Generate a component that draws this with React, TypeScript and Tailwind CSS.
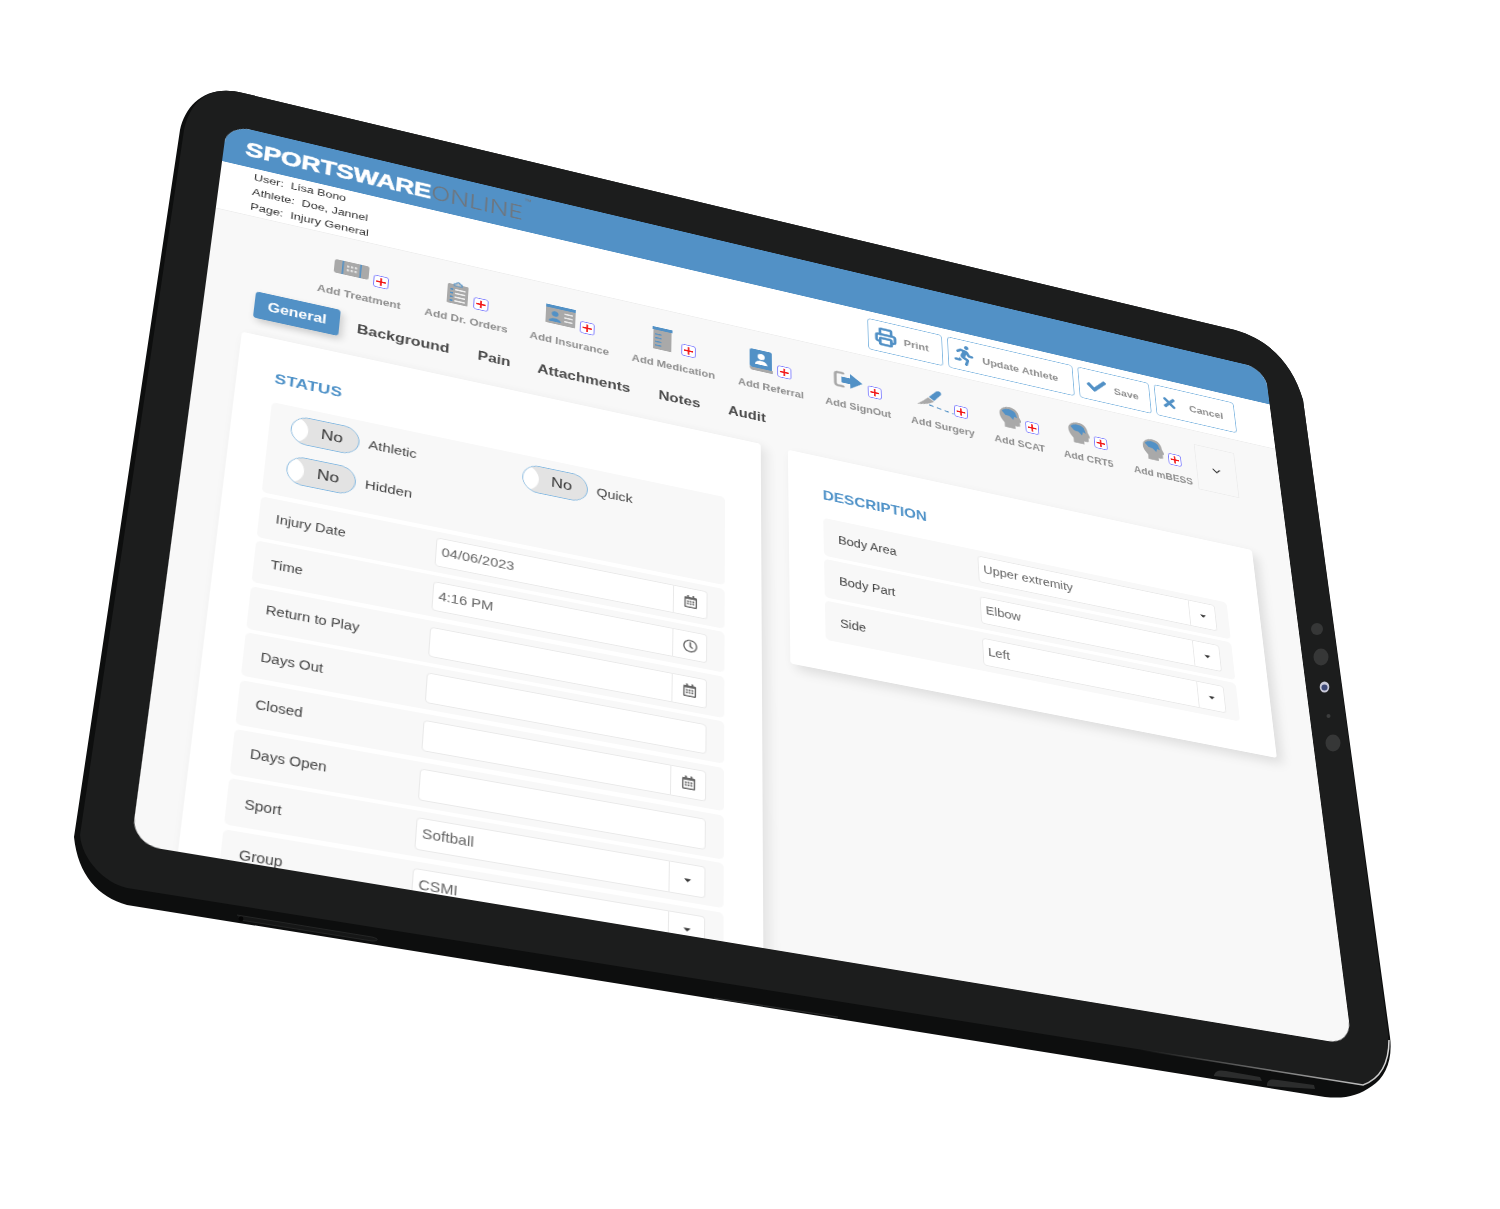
import React from "react";
import { Printer, ChevronDown } from "lucide-react";
import { FaRunning, FaCheck, FaTimes, FaRegCalendarAlt, FaRegClock, FaCaretDown } from "react-icons/fa";

function solve(A: number[][], b: number[]) {
  const n = b.length;
  const M = A.map((r, i) => [...r, b[i]]);
  for (let i = 0; i < n; i++) {
    let p = i;
    for (let j = i + 1; j < n; j++) if (Math.abs(M[j][i]) > Math.abs(M[p][i])) p = j;
    [M[i], M[p]] = [M[p], M[i]];
    for (let j = 0; j < n; j++) {
      if (j === i) continue;
      const f = M[j][i] / M[i][i];
      for (let k = i; k <= n; k++) M[j][k] -= f * M[i][k];
    }
  }
  return M.map((r, i) => r[n] / r[i]);
}
function toMatrix(src: number[][], dst: number[][]) {
  const A: number[][] = [], b: number[] = [];
  for (let i = 0; i < 4; i++) {
    const [x, y] = src[i], [u, v] = dst[i];
    A.push([x, y, 1, 0, 0, 0, -x * u, -y * u]); b.push(u);
    A.push([0, 0, 0, x, y, 1, -x * v, -y * v]); b.push(v);
  }
  const h = solve(A, b);
  return `matrix3d(${h[0]},${h[3]},0,${h[6]},${h[1]},${h[4]},0,${h[7]},0,0,1,0,${h[2]},${h[5]},0,1)`;
}
const W = 1200, H = 860;
const screenTransform = toMatrix([[0, 0], [W, 0], [W, H], [0, H]], [[227, 124], [1265, 369], [1352, 1045], [131, 844]]);

const G = "#a9a9a9", B = "#5291c6";

const Bandage = () => (
  <svg width="36" height="20" viewBox="0 0 36 20">
    <rect x="0" y="1" width="36" height="18" rx="3" fill={G} />
    <rect x="8" y="1" width="1.6" height="18" fill={B} />
    <rect x="26.4" y="1" width="1.6" height="18" fill={B} />
    {[13, 17, 21].map(x => [6, 11].map(y => <rect key={x + "-" + y} x={x} y={y} width="2.4" height="2.6" fill="#e4e4e4" />))}
  </svg>
);
const Clipboard = () => (
  <svg width="24" height="30" viewBox="0 0 24 30">
    <rect x="1" y="4" width="22" height="26" rx="1.5" fill={G} />
    <path d="M8 6 L8 3 L10 3 C10 0 14 0 14 3 L16 3 L16 6 Z" fill="#c8c8c8" stroke={B} strokeWidth="1.2" />
    {[11, 16, 21, 26].map(y => <rect key={y} x="9" y={y - 1} width="11" height="2" fill="#eee" />)}
    {[11, 16, 21, 26].map(y => <rect key={y} x="4" y={y - 1} width="3" height="2" fill={B} />)}
  </svg>
);
const Card = () => (
  <svg width="32" height="25" viewBox="0 0 32 25">
    <rect x="0" y="3" width="32" height="22" rx="1" fill={G} />
    <rect x="0" y="0" width="32" height="4" fill={B} />
    <circle cx="10" cy="11.5" r="3.6" fill={B} />
    <path d="M3.5 22 C3.5 16 16.5 16 16.5 22 Z" fill={B} />
    {[8, 13, 18].map(y => <rect key={y} x="20" y={y} width="9" height="2" fill="#e8e8e8" />)}
  </svg>
);
const Med = () => (
  <svg width="22" height="30" viewBox="0 0 22 30">
    <rect x="1" y="3" width="20" height="27" fill={G} />
    <rect x="0" y="0" width="22" height="4" fill={B} />
    {[9, 14, 19, 24].map(y => <rect key={y} x="3" y={y} width="7" height="1.6" fill={B} />)}
  </svg>
);
const Referral = () => (
  <svg width="26" height="30" viewBox="0 0 26 30">
    <path d="M3 0 H23 C24.5 0 25 1 25 2 V25 H3 C1 25 0 24 0 22 V3 C0 1 1 0 3 0 Z" fill={B} />
    <path d="M0 24 C0 27 1 29 4 29 H26 V25 H4 C2 25 1 24.500 0 24 Z" fill={G} />
    <circle cx="13" cy="9" r="4" fill="#fff" />
    <path d="M6 20 C6 12.500 20 12.500 20 20 Z" fill="#fff" />
  </svg>
);
const SignOut = () => (
  <svg width="34" height="24" viewBox="0 0 34 24">
    <path d="M11 3 H5 C3 3 2 4 2 6 V18 C2 20 3 21 5 21 H11" fill="none" stroke={G} strokeWidth="3.2" strokeLinecap="round" />
    <path d="M9 8 H19 V2 L33 12 L19 22 V16 H9 Z" fill={B} />
  </svg>
);
const Surgery = () => (
  <svg width="44" height="28" viewBox="0 0 44 28">
    <path d="M15 11 L24 1 C27 -1 31 1 29 5 L21 15 Z" fill={B} />
    <path d="M1 24 C6 20 11 15 14 12 L21 16 C15 21 8 23 1 24 Z" fill={G} />
    <path d="M15 22 L43 27" stroke={B} strokeWidth="1.6" strokeDasharray="5 4" fill="none" />
  </svg>
);
const Head = () => (
  <svg width="28" height="30" viewBox="0 0 40 42">
    <path d="M5 22 C1 10 11 1 22 1 C32 1 37 9 37 17 L41 26 C41 28 38 28 38 28 L38 34 C38 36 35 37 30 36 L30 42 L12 42 L12 33 C9 30 6 26 5 22 Z" fill={G} />
    <path d="M8 11 C13 4 25 3 31 10 L34 20 L29 18 L27 25 L21 19 L14 18 Z" fill={B} />
  </svg>
);
const Plus = () => (
  <div className="self-end flex items-center justify-center w-[16px] h-[16px] shrink-0 rounded-[3px] border border-[#7d7dff] bg-white">
    <svg width="12" height="12" viewBox="0 0 12 12"><path d="M6 1 V11 M1 6 H11" stroke="#f21818" strokeWidth="1.8" /></svg>
  </div>
);

const tools = [
  { w: "w-[111px]", gap: "gap-[5px]", icon: <Bandage />, label: "Add Treatment" },
  { w: "w-[111px]", gap: "gap-[5px]", icon: <Clipboard />, label: "Add Dr. Orders" },
  { w: "w-[110px]", gap: "gap-[5px]", icon: <Card />, label: "Add Insurance" },
  { w: "w-[117px]", gap: "gap-[10px]", icon: <Med />, label: "Add Medication" },
  { w: "w-[98px]", gap: "gap-[5px]", icon: <Referral />, label: "Add Referral" },
  { w: "w-[98px]", gap: "gap-[5px]", icon: <SignOut />, label: "Add SignOut" },
  { w: "w-[97px]", gap: "gap-0", icon: <Surgery />, label: "Add Surgery" },
  { w: "w-[82px]", gap: "gap-[5px]", icon: <Head />, label: "Add SCAT" },
  { w: "w-[84px]", gap: "gap-[5px]", icon: <Head />, label: "Add CRT5" },
  { w: "w-[78px]", gap: "gap-[5px]", icon: <Head />, label: "Add mBESS" },
];

const Btn = ({ cls, icon, label }: { cls: string; icon: React.ReactNode; label: string }) => (
  <div className={`${cls} h-[44px] flex items-center bg-white border border-[#86bae2] rounded-[4px]`}>
    {icon}
    <span className="pt-[4px] text-[13px] font-bold text-[#8e8e8e] whitespace-nowrap">{label}</span>
  </div>
);

const Toggle = ({ label }: { label: string }) => (
  <div className="flex items-center gap-[9px]">
    <div className="h-[34px] w-[68px] flex overflow-hidden rounded-full border-[1.5px] border-[#86bae2] bg-[#e3e3e3]">
      <div className="w-[16px] bg-white rounded-r-full" />
      <div className="flex-1 flex items-center justify-center pr-[3px] text-[17px] text-[#333]">No</div>
    </div>
    <span className="text-[14.8px] text-[#444]">{label}</span>
  </div>
);

const Addon = ({ w, children }: { w: string; children: React.ReactNode }) => (
  <div className={`${w} h-[34px] flex items-center justify-center bg-white border border-l-0 border-[#e9e9e9] rounded-r-[4px] text-[#666]`}>{children}</div>
);

const Row = ({ label, value, addon, wide }: { label: string; value?: string; addon?: React.ReactNode; wide?: boolean }) => (
  <div className={`${wide ? "pr-[15px]" : "pr-[18px]"} h-[48px] shrink-0 flex items-center pl-[16px] bg-[#f8f8f8] rounded-[5px]`}>
    <div className="w-[156px] shrink-0 text-[14px] text-[#444]">{label}</div>
    <div className={`${addon ? "rounded-l-[4px]" : "rounded-[4px]"} flex-1 h-[34px] flex items-center px-[5px] bg-white border border-[#e9e9e9] text-[14.5px] text-[#666]`}>{value}</div>
    {addon}
  </div>
);

const Cal = <FaRegCalendarAlt size={15} />;
const Caret = <FaCaretDown size={11} className="text-[#333]" />;

function Screen() {
  return (
    <div
      className="absolute left-0 top-0 origin-top-left w-[1200px] h-[860px] flex flex-col overflow-hidden rounded-[26px] bg-[#f8f8f8] blur-[0.35px]"
      style={{ transform: screenTransform, fontFamily: '"Liberation Sans", Arial, sans-serif' }}
    >
      <div className="h-[52px] shrink-0 flex items-end pl-[22px] pb-[11px] bg-[#5291c6]">
        <span className="text-[28px] leading-[27px] font-bold tracking-[-0.3px] text-white [-webkit-text-stroke:0.7px_white]">SPORTSWARE</span>
        <span className="text-[27px] leading-[27px] font-light text-[#6e767f]" style={{ fontFamily: 'Inter, sans-serif' }}>ONLINE</span>
        <span className="text-[9px] leading-[18px] self-start text-[#6e767f]">™</span>
      </div>

      <div className="h-[65px] shrink-0 flex justify-between bg-white border-b border-[#eee]">
        <div className="pl-[34px] pt-[2px] text-[13px] leading-[20px] text-[#333] whitespace-pre">
          <div>User:  Lisa Bono</div>
          <div>Athlete:  Doe, Jannel</div>
          <div>Page:  Injury General</div>
        </div>
        <div className="flex gap-[6px] pt-[10px] pr-[47px]">
          <Btn cls="w-[88px] pl-[7px] gap-[8px]" icon={<Printer size={26} strokeWidth={3} className="text-[#5291c6]" />} label="Print" />
          <Btn cls="w-[151px] pl-[4px] gap-[8px]" icon={<FaRunning size={28} className="text-[#5291c6]" />} label="Update Athlete" />
          <Btn cls="w-[88px] pl-[9px] gap-[9px]" icon={<FaCheck size={24} className="text-[#5291c6]" />} label="Save" />
          <Btn cls="w-[100px] pl-[6px] gap-[14px]" icon={<FaTimes size={21} className="text-[#5291c6]" />} label="Cancel" />
        </div>
      </div>

      <div className="h-[96px] shrink-0 flex items-start pl-[110px] pt-[23px]">
        {tools.map(t => (
          <div key={t.label} className={`${t.w} shrink-0`}>
            <div className="w-fit flex flex-col items-center">
              <div className={`${t.gap} h-[33px] flex items-center justify-center`}>
                {t.icon}
                <Plus />
              </div>
              <div className="mt-[10px] text-[12.3px] leading-[16px] font-bold text-[#8e8e8e] whitespace-nowrap">{t.label}</div>
            </div>
          </div>
        ))}
        <div className="w-[50px] h-[63px] -mt-[4px] flex items-center justify-center border border-[#ededed] text-[#333]">
          <ChevronDown size={16} />
        </div>
      </div>

      <div className="h-[34px] shrink-0 flex items-center pl-[50px]">
        <div className="w-[86px] h-[34px] mr-[18px] flex items-center justify-center rounded-[4px] bg-[#5291c6] text-[16px] font-bold text-white shadow-[3px_4px_8px_rgba(0,0,0,0.18)]">General</div>
        <div className="flex pt-[4px] text-[16.4px] font-bold text-[#4a4a4a]">
          <div className="w-[125px]">Background</div>
          <div className="w-[63px]">Pain</div>
          <div className="w-[130px]">Attachments</div>
          <div className="w-[76px]">Notes</div>
          <div>Audit</div>
        </div>
      </div>

      <div className="flex items-start gap-[30px] pl-[41px] pt-[21px]">
        <div className="w-[543px] shrink-0 pl-[37px] pr-[39px] pt-[39px] pb-[40px] bg-white rounded-[4px] shadow-[6px_4px_14px_rgba(0,0,0,0.09)]">
          <div className="h-[21px] mb-[19px] text-[17.2px] leading-[21px] font-bold tracking-[0.2px] text-[#4f92c8]">STATUS</div>
          <div className="flex flex-col gap-[4.6px]">
            <div className="h-[110px] grid grid-cols-[233px_1fr] content-start gap-y-[15px] pl-[21px] pt-[10px] rounded-[5px] bg-[#f8f8f8]">
              <Toggle label="Athletic" />
              <Toggle label="Quick" />
              <Toggle label="Hidden" />
            </div>
            <Row label="Injury Date" value="04/06/2023" addon={<Addon w="w-[35px]">{Cal}</Addon>} />
            <Row label="Time" value="4:16 PM" addon={<Addon w="w-[35px]"><FaRegClock size={15} /></Addon>} />
            <Row label="Return to Play" addon={<Addon w="w-[35px]">{Cal}</Addon>} />
            <Row label="Days Out" />
            <Row label="Closed" addon={<Addon w="w-[35px]">{Cal}</Addon>} />
            <Row label="Days Open" />
            <Row label="Sport" value="Softball" addon={<Addon w="w-[35px]">{Caret}</Addon>} />
            <Row label="Group" value="CSMI" addon={<Addon w="w-[35px]">{Caret}</Addon>} />
          </div>
        </div>

        <div className="w-[540px] shrink-0 pl-[38px] pr-[39px] pt-[39px] pb-[37px] bg-white rounded-[4px] shadow-[6px_6px_14px_rgba(0,0,0,0.11)]">
          <div className="h-[21px] mb-[19px] text-[17px] leading-[21px] font-bold text-[#4f92c8]">DESCRIPTION</div>
          <div className="flex flex-col gap-[4px]">
            <Row wide label="Body Area" value="Upper extremity" addon={<Addon w="w-[31px]">{Caret}</Addon>} />
            <Row wide label="Body Part" value="Elbow" addon={<Addon w="w-[31px]">{Caret}</Addon>} />
            <Row wide label="Side" value="Left" addon={<Addon w="w-[31px]">{Caret}</Addon>} />
          </div>
        </div>
      </div>
    </div>
  );
}

function Frame() {
  return (
    <svg className="absolute inset-0 w-full h-full" viewBox="0 0 1500 1209">
      <defs>
        <linearGradient id="edge" x1="0" x2="1" y1="0" y2="0">
          <stop offset="0.72" stopColor="#bdbdbd" stopOpacity="0" />
          <stop offset="1" stopColor="#d8d8d8" />
        </linearGradient>
      </defs>
      <path
        d="M243 93 L1235 330 C1270 340 1293 365 1303 400 L1390 1037 C1393 1060 1385 1078 1372 1086 C1358 1096 1345 1099 1325 1097 L127 905 C98 897 78 875 74 837 L180 130 C186 104 206 84 243 93 Z"
        fill="#0d0e0e"
      />
      <path
        d="M243 93 L1235 330 C1270 340 1293 365 1303 400 L1388 1032 C1390 1060 1385 1076 1363 1085 L127 888 C105 883 82 860 80 835 L184 130 C190 104 206 84 243 93 Z"
        fill="#1c1d1d"
      />
      <path d="M500 948 L1363 1085 C1382 1078 1389 1060 1389 1040" fill="none" stroke="url(#edge)" strokeWidth="1.5" />
      <path d="M237 915 L372 937 C380 939 378 941 372 941 L240 920" fill="#161717" stroke="#2a2b2b" strokeWidth="0.8" />
      <circle cx="241" cy="919" r="2.4" fill="#050505" />
      <path d="M714 998 L838 1017" stroke="#2a2b2b" strokeWidth="1.2" />
      <path d="M1214 1075 C1216 1070 1220 1070 1226 1071 L1260 1077 L1262 1081 L1214 1076 Z" fill="#2c2d2d" />
      <path d="M1267 1084 C1268 1079 1272 1079 1278 1080 L1314 1085 L1315 1089 L1267 1086 Z" fill="#2c2d2d" />
      <circle cx="1317" cy="629" r="6" fill="#363737" />
      <ellipse cx="1321" cy="657" rx="7.500" ry="8.500" fill="#363737" />
      <ellipse cx="1324.500" cy="687" rx="4.800" ry="5.500" fill="#c9c9d8" />
      <circle cx="1324.500" cy="687.500" r="3" fill="#3f4a78" />
      <circle cx="1328.500" cy="716" r="2" fill="#3c3d3d" />
      <ellipse cx="1333" cy="743" rx="7.500" ry="8.500" fill="#363737" />
    </svg>
  );
}

export default function App() {
  return (
    <div className="relative w-[1500px] h-[1209px] overflow-hidden bg-white">
      <Frame />
      <Screen />
    </div>
  );
}
